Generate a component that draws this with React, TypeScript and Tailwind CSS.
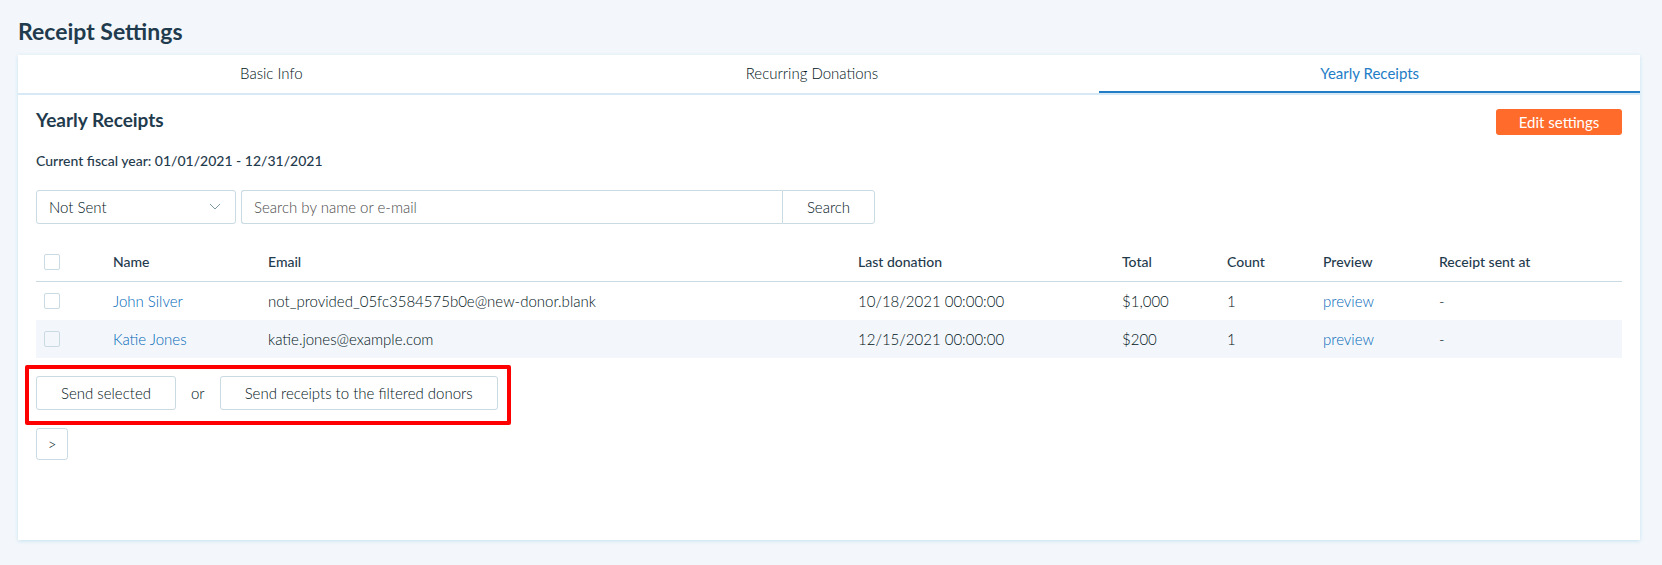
type Donor = {
  name: string;
  email: string;
  lastDonation: string;
  total: string;
  count: number;
  sentAt: string;
};

const tabs = ["Basic Info", "Recurring Donations", "Yearly Receipts"];
const activeTab = "Yearly Receipts";

const donors: Donor[] = [
  {
    name: "John Silver",
    email: "not_provided_05fc3584575b0e@new-donor.blank",
    lastDonation: "10/18/2021 00:00:00",
    total: "$1,000",
    count: 1,
    sentAt: "-",
  },
  {
    name: "Katie Jones",
    email: "katie.jones@example.com",
    lastDonation: "12/15/2021 00:00:00",
    total: "$200",
    count: 1,
    sentAt: "-",
  },
];

const outlineButton = "h-[34px] rounded-[3px] border border-[#c9dae3] bg-white px-6 hover:bg-[#f3f7fb]";
const headCell = "border-b border-[#c9dae3] px-2 font-medium";

function Checkbox({ label }: { label: string }) {
  return (
    <input
      type="checkbox"
      aria-label={label}
      className="block h-4 w-4 appearance-none rounded-[2px] border border-[#c9dae3] bg-transparent checked:bg-[#237dc6]"
    />
  );
}

function Tabs() {
  return (
    <div role="tablist" className="grid grid-cols-3 border-b-2 border-[#d6e9f5]">
      {tabs.map((tab) => (
        <button
          key={tab}
          type="button"
          role="tab"
          aria-selected={tab === activeTab}
          className={
            tab === activeTab
              ? "h-[38px] border-b-2 border-[#237dc6] font-normal text-[#237dc6]"
              : "h-[38px] border-b-2 border-transparent pr-[34px]"
          }
        >
          {tab}
        </button>
      ))}
    </div>
  );
}

function Filters() {
  return (
    <form className="mt-[19px] flex gap-[5px]" onSubmit={(e) => e.preventDefault()}>
      <div className="relative w-[200px]">
        <select
          aria-label="Receipt status"
          className="h-[34px] w-full appearance-none rounded-[3px] border border-[#c9dae3] bg-white px-3"
        >
          <option>Not Sent</option>
          <option>Sent</option>
        </select>
        <svg
          viewBox="0 0 12 8"
          fill="none"
          stroke="currentColor"
          className="pointer-events-none absolute top-[13px] right-[15px] h-2 w-3 text-[#7e98a6]"
        >
          <path d="M1 1l5 5 5-5" />
        </svg>
      </div>
      <div className="flex w-[634px]">
        <input
          type="text"
          aria-label="Search by name or e-mail"
          placeholder="Search by name or e-mail"
          className="h-[34px] min-w-0 flex-1 rounded-l-[3px] border border-r-0 border-[#c9dae3] bg-white px-3 placeholder:text-[#4a4a4a]"
        />
        <button type="submit" className="h-[34px] w-[93px] rounded-r-[3px] border border-[#c9dae3]">
          Search
        </button>
      </div>
    </form>
  );
}

function DonorTable() {
  return (
    <table className="mt-[18px] w-full table-fixed border-separate border-spacing-0 text-left">
      <thead className="text-sm text-[#1f3b4d]">
        <tr className="h-10">
          <th className={`${headCell} w-[69px]`}>
            <Checkbox label="Select all donors" />
          </th>
          <th className={`${headCell} w-[155px]`}>Name</th>
          <th className={headCell}>Email</th>
          <th className={`${headCell} w-[264px]`}>Last donation</th>
          <th className={`${headCell} w-[105px]`}>Total</th>
          <th className={`${headCell} w-24`}>Count</th>
          <th className={`${headCell} w-[116px]`}>Preview</th>
          <th className={`${headCell} w-[191px]`}>Receipt sent at</th>
        </tr>
      </thead>
      <tbody>
        {donors.map((donor) => (
          <tr key={donor.name} className="h-[38px] even:bg-[#f3f7fb]">
            <td className="px-2">
              <Checkbox label={`Select ${donor.name}`} />
            </td>
            <td className="px-2">
              <a href="#donor" className="text-[#0067b8]">
                {donor.name}
              </a>
            </td>
            <td className="px-2">{donor.email}</td>
            <td className="px-2">{donor.lastDonation}</td>
            <td className="px-2">{donor.total}</td>
            <td className="px-2">{donor.count}</td>
            <td className="px-2">
              <a href="#preview" className="text-[#0067b8]">
                preview
              </a>
            </td>
            <td className="px-2">{donor.sentAt}</td>
          </tr>
        ))}
      </tbody>
    </table>
  );
}

export default function App() {
  return (
    <div className="flex min-h-screen flex-col bg-[#f3f7fb] pt-[19px] pr-[22px] pb-[25px] pl-[18px] font-['Lato',sans-serif] text-[15px] leading-5 font-light text-[#001420]">
      <h1 className="text-[23px] leading-6 font-bold text-[#1f3b4d]">Receipt Settings</h1>

      <main className="mt-3 flex-1 bg-white shadow-[0_1px_4px_#c5e1f0]">
        <Tabs />

        <section className="px-[18px] pt-[14px] pb-6">
          <div className="flex items-start justify-between">
            <h2 className="text-[19px] leading-[22px] font-bold text-[#1f3b4d]">Yearly Receipts</h2>
            <button type="button" className="h-[26px] w-[126px] rounded-[3px] bg-[#ff6b2b] font-normal text-white">
              Edit settings
            </button>
          </div>

          <p className="mt-4 text-sm leading-5 font-medium text-[#1f3b4d]">
            Current fiscal year: 01/01/2021 - 12/31/2021
          </p>

          <Filters />
          <DonorTable />

          <div className="relative mt-[18px] flex w-fit items-center">
            <button type="button" className={outlineButton}>
              Send selected
            </button>
            <span className="px-[15px]">or</span>
            <button type="button" className={outlineButton}>
              Send receipts to the filtered donors
            </button>
            {/* Highlight around the bulk actions */}
            <div className="pointer-events-none absolute -top-[11px] -right-[13px] -bottom-[15px] -left-[11px] rounded-[2px] border-4 border-[#ff0000]" />
          </div>

          <button
            type="button"
            aria-label="Next page"
            className="mt-[18px] block h-8 w-8 rounded-[3px] border border-[#c9dae3]"
          >
            &gt;
          </button>
        </section>
      </main>
    </div>
  );
}
